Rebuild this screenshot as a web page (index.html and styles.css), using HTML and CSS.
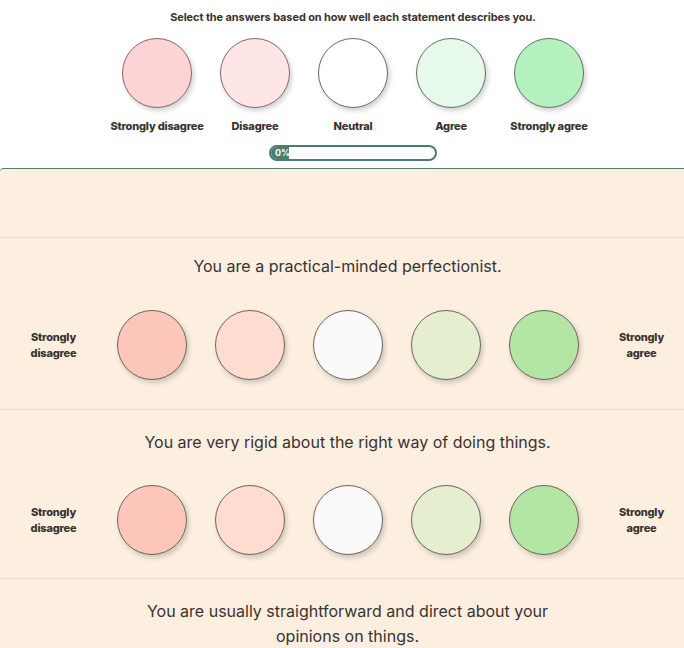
FILE: index.html
```html
<!DOCTYPE html>
<html lang="en">
<head>
<meta charset="UTF-8" />
<meta name="viewport" content="width=device-width, initial-scale=1" />
<title>Personality test</title>
<link rel="stylesheet" href="styles.css">
</head>
<body>
<header class="intro">
    <p class="intro-text">Select the answers based on how well each statement describes you.</p>
    <div class="legend">
        <div class="legend-item"><span class="dot top-1"></span><span class="legend-label">Strongly disagree</span></div>
        <div class="legend-item"><span class="dot top-2"></span><span class="legend-label">Disagree</span></div>
        <div class="legend-item"><span class="dot top-3"></span><span class="legend-label">Neutral</span></div>
        <div class="legend-item"><span class="dot top-4"></span><span class="legend-label">Agree</span></div>
        <div class="legend-item"><span class="dot top-5"></span><span class="legend-label">Strongly agree</span></div>
    </div>
    <div class="progress"><div class="progress-fill" style="width: 18px;">0%</div></div>
</header>
<main class="panel">
    <div class="spacer"></div>
    <section class="question">
        <p class="question-text">You are a practical-minded perfectionist.</p>
        <div class="answers">
            <span class="side-label">Strongly disagree</span>
            <button class="dot ans-1" aria-label="Strongly disagree"></button>
            <button class="dot ans-2" aria-label="Disagree"></button>
            <button class="dot ans-3" aria-label="Neutral"></button>
            <button class="dot ans-4" aria-label="Agree"></button>
            <button class="dot ans-5" aria-label="Strongly agree"></button>
            <span class="side-label">Strongly agree</span>
        </div>
    </section>
    <section class="question q-second">
        <p class="question-text">You are very rigid about the right way of doing things.</p>
        <div class="answers">
            <span class="side-label">Strongly disagree</span>
            <button class="dot ans-1" aria-label="Strongly disagree"></button>
            <button class="dot ans-2" aria-label="Disagree"></button>
            <button class="dot ans-3" aria-label="Neutral"></button>
            <button class="dot ans-4" aria-label="Agree"></button>
            <button class="dot ans-5" aria-label="Strongly agree"></button>
            <span class="side-label">Strongly agree</span>
        </div>
    </section>
    <section class="question q-third">
        <p class="question-text">You are usually straightforward and direct about your<br>opinions on things.</p>
    </section>
</main>
</body>
</html>
```

FILE: styles.css
```css
body {
    margin: 0;
    font-family: Inter, Roboto, "Liberation Sans", sans-serif;
    background-color: #ffffff;
    color: #3a3331;
}
.intro {
    padding: 10px 0 7px 22px;
    display: flex;
    flex-direction: column;
    align-items: center;
}
.intro-text {
    margin: 0;
    font-size: 11px;
    font-weight: 700;
    line-height: 14px;
    letter-spacing: -0.1px;
}
.legend {
    display: flex;
    margin-top: 14px;
}
.legend-item {
    width: 98px;
    display: flex;
    flex-direction: column;
    align-items: center;
}
.legend-label {
    margin-top: 10px;
    font-size: 11px;
    font-weight: 800;
    line-height: 16px;
    white-space: nowrap;
    letter-spacing: -0.2px;
}
.dot {
    display: block;
    width: 70px;
    height: 70px;
    box-sizing: border-box;
    border-radius: 50%;
    border: 1px solid #6e6461;
    box-shadow: 2px 3px 5px rgba(0,0,0,0.18);
    padding: 0;
    flex-shrink: 0;
    cursor: pointer;
}
.top-1 { background-color: #fdd4d6; border-color: #86696a; }
.top-2 { background-color: #ffe6e6; border-color: #86696a; }
.top-3 { background-color: #ffffff; border-color: #6a6a6a; }
.top-4 { background-color: #e6f9ea; border-color: #5f7464; }
.top-5 { background-color: #b4f1bf; border-color: #5f7464; }
.progress {
    margin-top: 11px;
    width: 168px;
    height: 16px;
    box-sizing: border-box;
    border: 2px solid #4c7e6c;
    border-radius: 8px;
    overflow: hidden;
}
.progress-fill {
    height: 100%;
    background-color: #4c7e6c;
    color: #ffffff;
    font-size: 9px;
    font-weight: 700;
    line-height: 12px;
    padding-left: 4px;
    box-sizing: border-box;
    white-space: nowrap;
}
.panel {
    display: block;
    background-color: #fcefe0;
    border-top: 1px solid #4c7e6c;
    border-radius: 4px 0 0 0;
}
.spacer {
    height: 68px;
}
.question {
    border-top: 1px solid #e6dcd2;
    padding: 16px 0 29px 11px;
    text-align: center;
}
.q-second {
    padding-top: 20px;
    padding-bottom: 23px;
}
.q-third {
    padding-top: 20px;
}
.question-text {
    margin: 0;
    font-size: 16px;
    line-height: 25px;
    color: #3a3331;
}
.answers {
    display: flex;
    justify-content: center;
    align-items: center;
    gap: 28px;
    margin-top: 31px;
}
.q-second .answers {
    margin-top: 30px;
}
.side-label {
    width: 70px;
    font-size: 11px;
    font-weight: 800;
    line-height: 16px;
    text-align: center;
    letter-spacing: -0.2px;
}
.ans-1 { background-color: #fdc6bb; }
.ans-2 { background-color: #fedcd0; }
.ans-3 { background-color: #fafafa; }
.ans-4 { background-color: #e5eecf; }
.ans-5 { background-color: #b3e5a5; }
```
